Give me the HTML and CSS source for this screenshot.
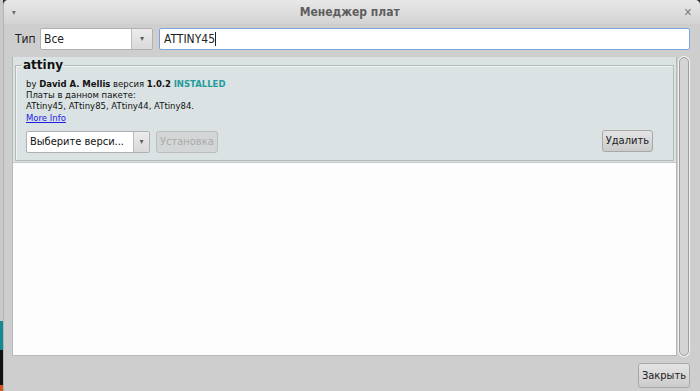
FILE: index.html
```html
<!DOCTYPE html>
<html lang="ru">
<head>
    <meta charset="UTF-8">
    <title>Менеджер плат</title>
    <link rel="stylesheet" href="styles.css">
</head>
<body>
    <div class="desktop-edge"></div>

    <div class="window">
        <div class="titlebar">
            <span class="menu-arrow">&#9662;</span>
            <span class="title">Менеджер плат</span>
            <span class="close">&#10005;</span>
        </div>

        <div class="content">
            <div class="filter-row">
                <span class="label">Тип</span>
                <div class="combo type-combo">
                    <span class="combo-value">Все</span>
                    <span class="combo-arrow">&#9662;</span>
                </div>
                <div class="search">ATTINY45<span class="caret"></span></div>
            </div>

            <div class="list-row">
                <div class="list">
                    <div class="item">
                        <fieldset class="item-box">
                            <legend>attiny</legend>
                            <p>by <b>David A. Mellis</b> версия <b>1.0.2</b> <b class="installed">INSTALLED</b></p>
                            <p>Платы в данном пакете:</p>
                            <p>ATtiny45, ATtiny85, ATtiny44, ATtiny84.</p>
                            <p><a href="#">More Info</a></p>
                            <div class="item-actions">
                                <div class="combo version-combo">
                                    <span class="combo-value">Выберите верси...</span>
                                    <span class="combo-arrow">&#9662;</span>
                                </div>
                                <button class="btn" disabled>Установка</button>
                                <button class="btn remove">Удалить</button>
                            </div>
                        </fieldset>
                    </div>
                </div>
                <div class="scrollbar"><div class="trough"></div></div>
            </div>

            <div class="bottom-row">
                <button class="btn close-btn">Закрыть</button>
            </div>
        </div>
    </div>
</body>
</html>
```

FILE: styles.css
```css
body {
    margin: 0;
    height: 391px;
    overflow: hidden;
    display: flex;
    background-color: #2b2b2b;
    font-family: 'DejaVu Sans Condensed', 'DejaVu Sans', sans-serif;
}

.desktop-edge {
    width: 3px;
    background: linear-gradient(#c9c9c9 0, #c9c9c9 321px, #138a8f 321px, #138a8f 350px, #111 350px, #111 385px, #d9531e 385px);
}

.window {
    flex: 1;
    display: flex;
    flex-direction: column;
    background-color: #cecece;
    border-radius: 5px 5px 0 0;
    border-left: 1px solid #b4b4b4;
}

.titlebar {
    height: 24px;
    flex: none;
    display: flex;
    align-items: center;
    justify-content: space-between;
    padding: 0 8px 0 8px;
    background: linear-gradient(#e8e8e8, #d3d3d3);
    border-radius: 5px 5px 0 0;
    color: #5a5a5a;
}

.menu-arrow {
    font-size: 8px;
    color: #6a6a6a;
}

.title {
    font-size: 12px;
    font-weight: bold;
    color: #5e5e5e;
}

.close {
    font-size: 11px;
    color: #777;
}

.content {
    flex: 1;
    display: flex;
    flex-direction: column;
    padding: 4px 10px 4px 8px;
}

.filter-row {
    display: flex;
    align-items: center;
    height: 21px;
    font-size: 12px;
    color: #222;
}

.label {
    margin-left: 3px;
    width: 25px;
}

.combo {
    display: flex;
    align-items: stretch;
    background-color: #fff;
    border: 1px solid #b0b0b0;
    border-radius: 2px;
    box-sizing: border-box;
}

.combo-value {
    flex: 1;
    display: flex;
    align-items: center;
    padding-left: 3px;
}

.combo-arrow {
    width: 20px;
    display: flex;
    align-items: center;
    justify-content: center;
    font-size: 8px;
    color: #555;
    background: linear-gradient(#ececec, #d9d9d9);
    border-left: 1px solid #bcbcbc;
}

.type-combo {
    width: 113px;
    height: 22px;
}

.search {
    flex: 1;
    height: 22px;
    margin-left: 6px;
    box-sizing: border-box;
    display: flex;
    align-items: center;
    padding-left: 4px;
    background-color: #fff;
    border: 1px solid #7ba4d8;
    border-radius: 2px;
}

.caret {
    width: 1px;
    height: 14px;
    background-color: #222;
}

.list-row {
    display: flex;
    margin-top: 8px;
    height: 299px;
}

.list {
    flex: 1;
    background-color: #fdfdfd;
    border: 1px solid #b8b8b8;
    border-top: none;
}

.item {
    padding: 1px 2px 1px 2px;
    background-color: #dae2e3;
    border-bottom: 1px solid #c3c9ca;
}

.item-box {
    margin: 0;
    height: 103px;
    box-sizing: border-box;
    padding: 7px 20px 0 10px;
    border: 1px solid #b3baba;
    box-shadow: inset 1px 1px 0 #eef2f2;
    font-family: 'DejaVu Sans', sans-serif;
    font-size: 8.5px;
    color: #111;
}

.item-box legend {
    padding: 0 1px;
    margin-left: -4px;
    font-size: 12px;
    font-weight: bold;
    color: #111;
}

.item-box p {
    margin: 0;
    line-height: 11.2px;
}

.installed {
    color: #1f9c9c;
}

.item-box a {
    color: #1c1ce6;
}

.item-actions {
    display: flex;
    align-items: center;
    margin-top: 7px;
}

.version-combo {
    width: 124px;
    height: 22px;
    font-family: 'DejaVu Sans Condensed', sans-serif;
    font-size: 11px;
}

.version-combo .combo-arrow {
    width: 15px;
}

.btn {
    height: 22px;
    padding: 0 3px;
    font-family: 'DejaVu Sans Condensed', sans-serif;
    font-size: 11px;
    color: #222;
    background: linear-gradient(#e4e4e4, #cbcbcb);
    border: 1px solid #a8a8a8;
    border-radius: 3px;
}

.btn:disabled {
    margin-left: 6px;
    color: #aaa;
    background: #d2d6d6;
    border-color: #bcbcbc;
}

.remove {
    margin-left: auto;
    margin-top: -2px;
}

.scrollbar {
    width: 12px;
    margin-left: 1px;
    display: flex;
    justify-content: center;
}

.trough {
    width: 8px;
    border: 1px solid #9e9e9e;
    border-radius: 5px;
    box-shadow: 0 0 0 1px #f4f4f4;
    background-color: #d4d4d4;
}

.bottom-row {
    display: flex;
    justify-content: flex-end;
    margin-top: 7px;
}

.close-btn {
    height: 25px;
    padding: 0 3px;
}
```
